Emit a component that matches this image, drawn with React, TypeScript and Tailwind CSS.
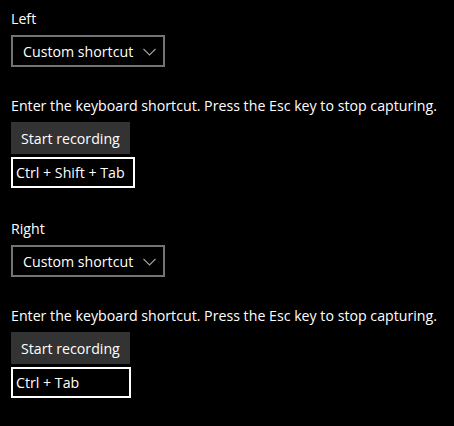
interface ShortcutSectionProps {
    label: string;
    keys: string;
    boxWidth: string;
}

function Chevron() {
    return (
        <svg width="13" height="8" viewBox="0 0 13 8" className="text-[#a0a0a0]">
            <polyline points="0.5,1 6.5,7 12.5,1" fill="none" stroke="currentColor" strokeWidth="1.1" />
        </svg>
    );
}

function ShortcutSection({ label, keys, boxWidth }: ShortcutSectionProps) {
    return (
        <div className="flex flex-col items-start">
            <div className="h-[20px] leading-[20px] pt-px">{label}</div>
            <button className="mt-[7px] flex items-center h-[32px] w-[154px] border-2 border-[#737373] pl-[10px] pr-[7px] pt-px">
                <span className="flex-1 text-left">Custom shortcut</span>
                <Chevron />
            </button>
            <div className="mt-[27px] h-[20px] leading-[20px] pt-[2px] whitespace-nowrap">
                Enter the keyboard shortcut. Press the Esc key to stop capturing.
            </div>
            <button className="mt-[8px] h-[32px] w-[119px] bg-[#333333] px-[10px] pt-px text-left">
                Start recording
            </button>
            <div className={`mt-[3px] h-[31px] border-2 border-white pl-[3px] pt-px flex items-center ${boxWidth}`}>
                {keys}
            </div>
        </div>
    );
}

export default function App() {
    return (
        <div
            className="w-[454px] h-[426px] bg-black text-white text-[14.2px] pl-[11px] pt-[8px] flex flex-col gap-[30px]"
            style={{ fontFamily: '"Open Sans", "Noto Sans", sans-serif' }}
        >
            <ShortcutSection label="Left" keys="Ctrl + Shift + Tab" boxWidth="w-[124px]" />
            <ShortcutSection label="Right" keys="Ctrl + Tab" boxWidth="w-[120px]" />
        </div>
    );
}
